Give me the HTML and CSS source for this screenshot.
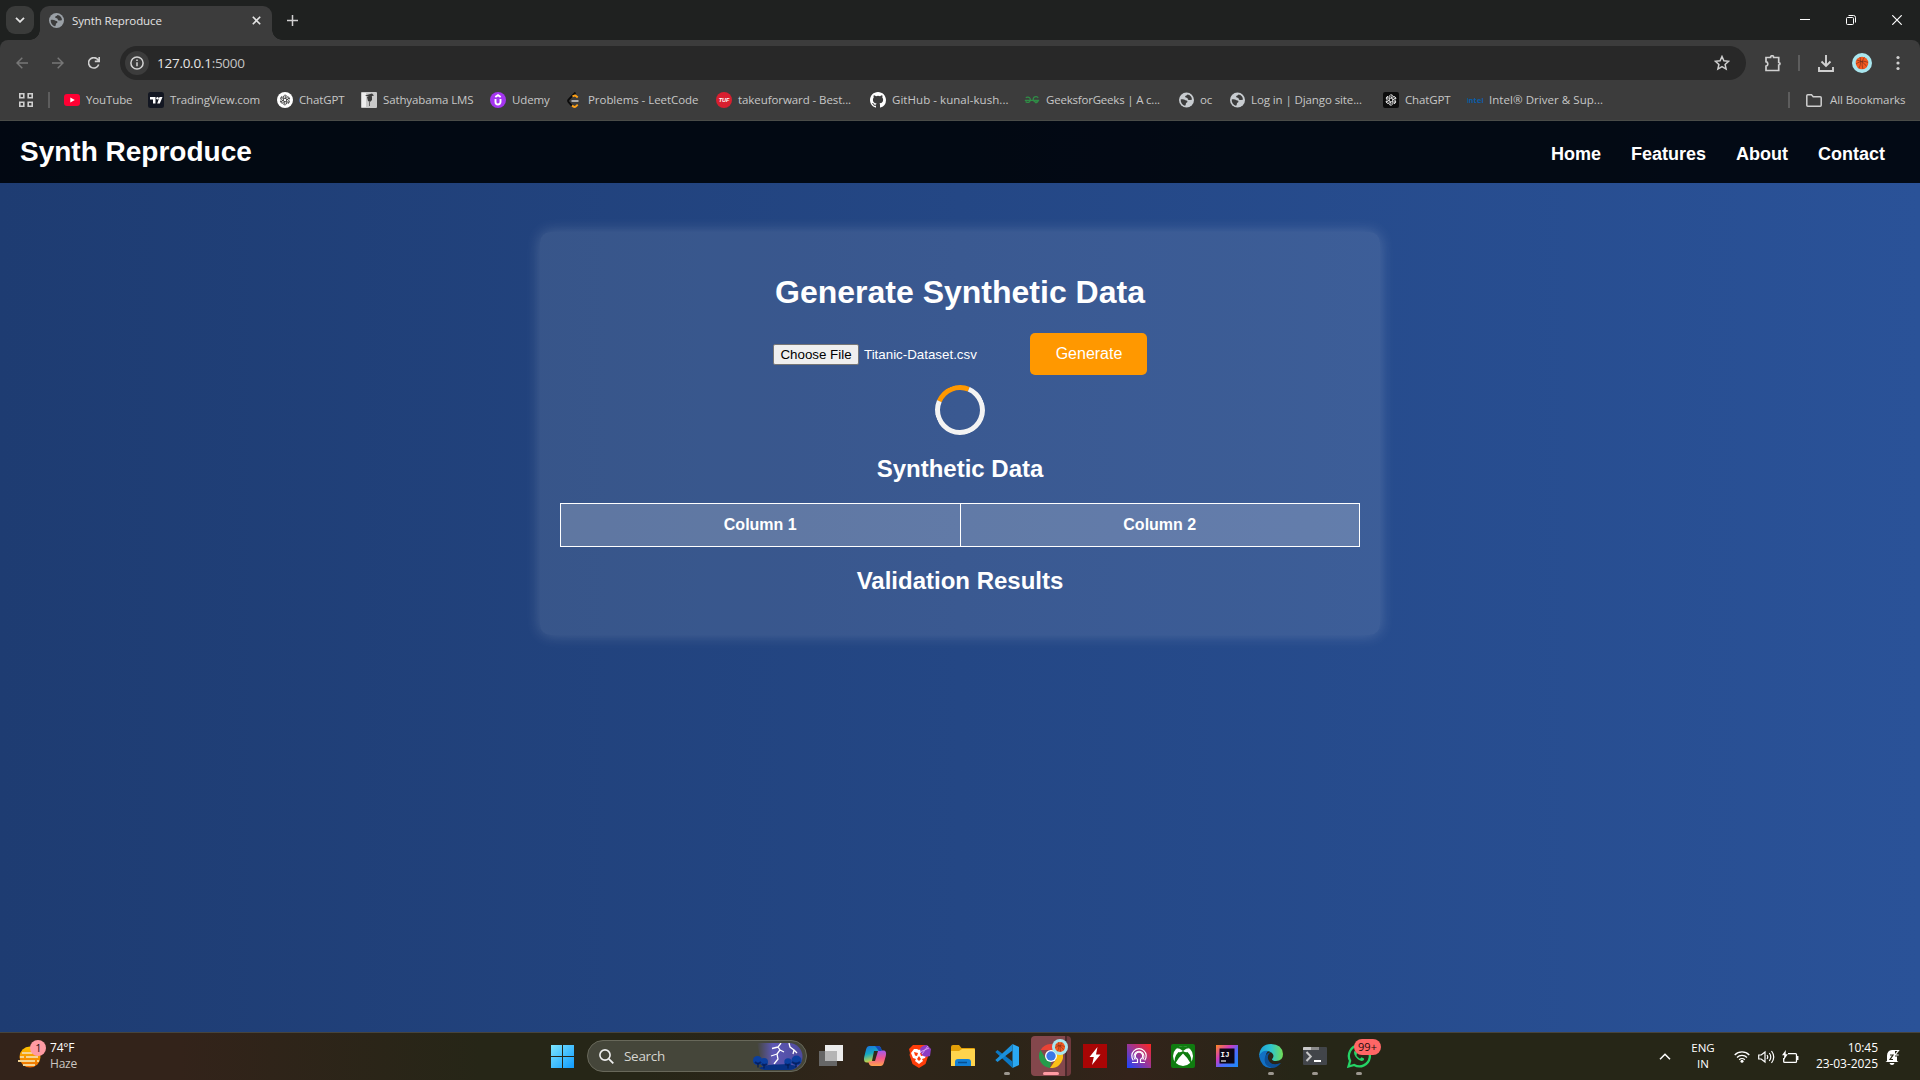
FILE: index.html
```html
<!DOCTYPE html>
<html lang="en">
<head>
<meta charset="utf-8">
<title>Synth Reproduce</title>
<link rel="stylesheet" href="styles.css">
</head>
<body>
<svg class="defs" width="0" height="0" aria-hidden="true">
  <symbol id="globe" viewBox="0 0 16 16"><circle cx="8" cy="8" r="8" fill="currentColor"/><path d="M1.800 7.500C3 6.800 5.500 7 6.600 8c1 .9 2.200.3 2.400 1.600.2 1.200-1.500 1-1.700 2.400-.1 1-.3 1.700-1 2.100C3.500 13.400 1.600 10.800 1.800 7.500zM9 2c-.3 1.300-2.600 1-2.500 2.500.1 1.200 1.600.8 2.300 1.400.8.7.4 1.900 1.700 2.100 1.200.2 2-.6 3.300-.2C13.900 4.500 12 2.500 9 2z" fill="#3c3c3c"/></symbol>
  <symbol id="knot" viewBox="0 0 24 24"><g fill="none" stroke="currentColor" stroke-width="1.500"><path id="petal" d="M12 8.200 8.700 10.100V5.900A3.600 3.600 0 0 1 14.900 3.500L11 5.700"/><use href="#petal" transform="rotate(60 12 12)"/><use href="#petal" transform="rotate(120 12 12)"/><use href="#petal" transform="rotate(180 12 12)"/><use href="#petal" transform="rotate(240 12 12)"/><use href="#petal" transform="rotate(300 12 12)"/></g></symbol>
  <symbol id="ball" viewBox="0 0 20 20"><circle cx="10" cy="10" r="10" fill="#a9e6ee"/><circle cx="10" cy="10" r="6.300" fill="#f4591f"/><path d="M4.600 7c4 .5 8 3 10 6.500M8 4c1 3 1 8-1.200 11.500M12.500 4.300C10 7 9.500 12 11 16M4 11c4-3 8-3.500 12-1.500" fill="none" stroke="#6a2b1b" stroke-width=".6"/></symbol>
</svg>

<div class="tabstrip">
  <div class="tab-search"><svg width="10" height="6" viewBox="0 0 10 6"><path d="m1 .8 4 4 4-4" fill="none" stroke="#e3e3e3" stroke-width="1.800"/></svg></div>
  <div class="tab">
    <svg class="tab-icon" width="15" height="15"><use href="#globe"/></svg>
    <span class="tab-title">Synth Reproduce</span>
    <svg width="9" height="9" viewBox="0 0 9 9"><path d="m.8.8 7.400 7.400m0-7.400L.8 8.200" stroke="#e3e3e3" stroke-width="1.600"/></svg>
  </div>
  <svg class="new-tab" width="11" height="11" viewBox="0 0 11 11"><path d="M5.500 0v11M0 5.500h11" stroke="#d0d0d0" stroke-width="1.500"/></svg>
  <div class="window-controls">
    <svg width="10" height="10" viewBox="0 0 10 10"><path d="M0 4.500h10" stroke="#fff"/></svg>
    <svg width="10" height="10" viewBox="0 0 10 10"><g fill="none" stroke="#fff"><rect x=".5" y="2.500" width="7" height="7" rx="1"/><path d="M2.500.5h5a2 2 0 0 1 2 2v5"/></g></svg>
    <svg width="10" height="10" viewBox="0 0 10 10"><path d="m.3.3 9.400 9.400m0-9.400L.3 9.700" stroke="#fff" stroke-width="1.200"/></svg>
  </div>
</div>

<div class="chrome-panel">
  <div class="toolbar">
    <div class="nav-buttons">
      <svg class="dim" width="12" height="12" viewBox="0 0 12 12"><path d="M12 6H1M6.300.7 1 6l5.300 5.300" fill="none" stroke="currentColor" stroke-width="1.500"/></svg>
      <svg class="dim" width="12" height="12" viewBox="0 0 12 12"><path d="M0 6h11M5.700.7 11 6l-5.300 5.300" fill="none" stroke="currentColor" stroke-width="1.500"/></svg>
      <svg width="12" height="12" viewBox="0 0 12 12"><path d="M10.700 7.500A5.200 5.200 0 1 1 9.800 2.500L11 4M11.200 0v4.400H6.800" fill="none" stroke="currentColor" stroke-width="1.600"/></svg>
    </div>
    <div class="omnibox">
      <span class="site-info"><svg width="14" height="14" viewBox="0 0 14 14"><circle cx="7" cy="7" r="6.100" fill="none" stroke="#d3d3d3" stroke-width="1.500"/><path d="M7 6.200v4M7 3.500v1.500" stroke="#d3d3d3" stroke-width="1.500"/></svg></span>
      <span class="url">127.0.0.1<span class="port">:5000</span></span>
      <svg class="star" width="16" height="16" viewBox="0 0 16 16"><path d="m8 1.500 1.900 4.300 4.700.5-3.500 3.200 1 4.600L8 11.700l-4.100 2.400 1-4.600L1.400 6.300l4.700-.5z" fill="none" stroke="#cfcfcf" stroke-width="1.500"/></svg>
    </div>
    <div class="toolbar-end">
      <svg class="puzzle" width="17" height="17" viewBox="0 0 17 17"><path d="M1 2.500h4.600v-.3a1.500 1.500 0 0 1 3 0v.3h5.100v5a1.300 1.300 0 0 1 0 2.600v5.400H1v-4.300a2.300 2.300 0 0 0 0-4.500z" fill="none" stroke="#d0d0d0" stroke-width="1.700"/></svg>
      <i class="divider"></i>
      <svg class="download" width="16" height="17" viewBox="0 0 16 17"><path d="M8 0v11M3.500 6.500 8 11l4.500-4.500M1 12v4h14v-4" fill="none" stroke="#d0d0d0" stroke-width="1.900"/></svg>
      <svg class="avatar" width="20" height="20"><use href="#ball"/></svg>
      <svg class="menu-dots" width="4" height="16" viewBox="0 0 4 16"><g fill="#d0d0d0"><circle cx="2" cy="2.500" r="1.600"/><circle cx="2" cy="8" r="1.600"/><circle cx="2" cy="13.500" r="1.600"/></g></svg>
    </div>
  </div>

  <div class="bookmarks">
    <svg class="apps" width="14" height="14" viewBox="0 0 14 14"><path d="M.8.8h4v4h-4zM9.200.8h4v4h-4zM.8 9.200h4v4h-4zM9.200 9.200h4v4h-4z" fill="none" stroke="#cfcfcf" stroke-width="1.600"/></svg>
    <i class="divider"></i>
    <div class="bookmark bm-youtube"><svg width="16" height="16" viewBox="0 0 16 16"><rect y="2" width="16" height="12" rx="3" fill="#ff0033"/><path d="m6.300 5.500 4.500 2.500-4.500 2.500z" fill="#fff"/></svg><span>YouTube</span></div>
    <div class="bookmark bm-tradingview"><svg width="16" height="16" viewBox="0 0 16 16"><rect width="16" height="16" rx="2.500" fill="#131722"/><path d="M2 5h5.500v6.500H5V7.500H2zM11.500 5H14.500l-2.700 6.500H9.200z" fill="#fff"/><circle cx="9.500" cy="6.200" r="1.200" fill="#fff"/></svg><span>TradingView.com</span></div>
    <div class="bookmark bm-chatgpt"><svg width="16" height="16" viewBox="0 0 16 16"><circle cx="8" cy="8" r="8" fill="#fff"/><use href="#knot" x="2" y="2" width="12" height="12" color="#222"/></svg><span>ChatGPT</span></div>
    <div class="bookmark bm-lms"><svg width="16" height="16" viewBox="0 0 16 16"><rect width="16" height="16" rx="1" fill="#c9c9c9"/><path d="M1 1h4v14H1z" fill="#eee"/><path d="M4 3.500 11 1.500l2 2-5 1.200zM6 5l5-1v4l-2 2-2-1z" fill="#3a3a3a"/><path d="M8.500 9v5" stroke="#666"/></svg><span>Sathyabama LMS</span></div>
    <div class="bookmark bm-udemy"><svg width="16" height="16" viewBox="0 0 16 16"><circle cx="8" cy="8" r="8" fill="#a435f0"/><path d="M5.500 7v3a2.500 2.500 0 0 0 5 0V7M5.300 5 8 3.200 10.700 5" fill="none" stroke="#fff" stroke-width="1.900"/></svg><span>Udemy</span></div>
    <div class="bookmark bm-leetcode"><svg width="16" height="16" viewBox="0 0 16 16"><g fill="none" stroke-width="1.900"><path d="M9.500.5 2.800 7.300c-1 1-.9 2 0 3l3.300 3.500" stroke="#0b0b0b"/><path d="m6.500 4.400 1.300-.6c.9-.4 1.800-.2 2.500.4l1.400 1.300M6 13.500q2.300 2.400 4 .8l1.700-1.700" stroke="#ffa116"/><path d="M5.500 9h7" stroke="#b3b3b3"/></g></svg><span>Problems - LeetCode</span></div>
    <div class="bookmark bm-tuf"><svg width="16" height="16" viewBox="0 0 16 16"><circle cx="8" cy="8" r="8" fill="#d81f2f"/><text x="8" y="10.200" text-anchor="middle" class="tuf-mark">TUF</text></svg><span>takeuforward - Best...</span></div>
    <div class="bookmark bm-github"><svg width="16" height="16" viewBox="0 0 16 16"><path fill="#fff" d="M8 0C3.580 0 0 3.580 0 8c0 3.540 2.290 6.530 5.470 7.590.4.070.55-.17.55-.38 0-.19-.010-.82-.010-1.490-2.010.37-2.530-.49-2.690-.94-.090-.23-.48-.94-.82-1.130-.28-.15-.68-.52-.010-.53.63-.010 1.080.58 1.230.82.72 1.210 1.870.87 2.330.66.070-.52.28-.87.510-1.070-1.780-.2-3.640-.89-3.640-3.950 0-.87.310-1.590.82-2.150-.080-.2-.36-1.020.080-2.120 0 0 .67-.21 2.200.82a7.640 7.640 0 0 1 4 0c1.530-1.040 2.200-.82 2.200-.82.44 1.100.16 1.920.080 2.120.51.56.82 1.270.82 2.150 0 3.070-1.870 3.750-3.650 3.950.29.25.54.73.54 1.480 0 1.070-.010 1.930-.010 2.200 0 .21.15.46.55.38A8.010 8.010 0 0 0 16 8c0-4.420-3.580-8-8-8z"/></svg><span>GitHub - kunal-kush...</span></div>
    <div class="bookmark bm-gfg"><svg width="16" height="16" viewBox="0 0 16 16"><path d="M.8 8.300h14.400M1.800 5.800A2.700 2.700 0 1 1 1.600 9.500M14.200 5.800A2.700 2.700 0 1 0 14.400 8.300 2.600 2.600 0 0 1 11 10.500" fill="none" stroke="#2f8d46" stroke-width="1.300"/></svg><span>GeeksforGeeks | A c...</span></div>
    <div class="bookmark bm-oc"><svg class="light-globe" width="15" height="16"><use href="#globe"/></svg><span>oc</span></div>
    <div class="bookmark bm-django"><svg class="light-globe" width="15" height="16"><use href="#globe"/></svg><span>Log in | Django site...</span></div>
    <div class="bookmark bm-chatgpt2"><svg width="16" height="16" viewBox="0 0 16 16"><rect width="16" height="16" rx="2" fill="#0c0c0c"/><use href="#knot" x="1.500" y="1.500" width="13" height="13" color="#fff"/></svg><span>ChatGPT</span></div>
    <div class="bookmark bm-intel"><svg width="16" height="16" viewBox="0 0 16 16"><text x="8" y="10.500" text-anchor="middle" class="intel-mark">intel</text></svg><span>Intel® Driver &amp; Sup...</span></div>
    <div class="all-bookmarks">
      <i class="divider"></i>
      <svg width="16" height="13" viewBox="0 0 16 13"><path d="M.8 11.200V1.800q0-1 1-1h3.700l1.700 2h7q1 0 1 1v7.400q0 1-1 1H1.800q-1 0-1-1z" fill="none" stroke="#cfcfcf" stroke-width="1.500"/></svg>
      <span>All Bookmarks</span>
    </div>
  </div>
</div>

<div class="page">
  <header class="site-header">
    <div class="brand">Synth Reproduce</div>
    <nav class="site-nav"><a>Home</a><a>Features</a><a>About</a><a>Contact</a></nav>
  </header>
  <main class="card">
    <h1>Generate Synthetic Data</h1>
    <div class="form-row">
      <div class="file-input"><span class="file-button">Choose File</span><span>Titanic-Dataset.csv</span></div>
      <button class="generate">Generate</button>
    </div>
    <div class="spinner"></div>
    <h2>Synthetic Data</h2>
    <table class="data-table"><tr><th>Column 1</th><th>Column 2</th></tr></table>
    <h2>Validation Results</h2>
  </main>
</div>

<div class="taskbar">
  <div class="weather">
    <svg width="28" height="28" viewBox="0 0 28 28"><defs><linearGradient id="sun" x2="0" y2="1"><stop stop-color="#ffc400"/><stop offset="1" stop-color="#f06a00"/></linearGradient></defs><circle cx="12" cy="17" r="10.500" fill="url(#sun)"/><path d="M4 13h10M2 17h4m2 0h12M0 21h17m2 0h2M5 25h12" stroke="#f5d491" stroke-width="1.800"/><circle cx="20" cy="8" r="8" fill="#ff9ba3"/><text x="20.500" y="12" text-anchor="middle" class="badge-text">1</text></svg>
    <div class="weather-text"><span class="temp">74°F</span><span class="sky">Haze</span></div>
  </div>

  <div class="apps-row">
    <div class="start"><svg width="23" height="23" viewBox="0 0 23 23"><defs><linearGradient id="win" x2="1" y2="1"><stop stop-color="#7ce6ff"/><stop offset="1" stop-color="#0f9bff"/></linearGradient></defs><path d="M0 0h11v11H0zM12 0h11v11H12zM0 12h11v11H0zM12 12h11v11H12z" fill="url(#win)"/></svg></div>
    <div class="search">
      <svg width="15" height="15" viewBox="0 0 15 15"><circle cx="6" cy="6" r="5.100" fill="none" stroke="#eee" stroke-width="1.600"/><path d="m9.800 9.800 4.500 4.500" stroke="#eee" stroke-width="1.800"/></svg>
      <span>Search</span>
      <svg class="storm" width="50" height="27" viewBox="0 0 50 27"><defs><linearGradient id="sky"><stop stop-color="#5d58b5" stop-opacity="0"/><stop offset=".35" stop-color="#5d58b5"/><stop offset="1" stop-color="#4e4a9d"/></linearGradient></defs><path d="M4 0h32a13.500 13.500 0 0 1 0 27H10z" fill="url(#sky)"/><path d="m28 0-3 4 2 3-3 4 1 5-4 5M25 4l-6 1.500M24 11l-6 2m9-6 4 2M36 0l1 4 4 3-1 4M41 7l3 3" fill="none" stroke="#fff" stroke-width="1.300"/><path d="M6 25q9-4 18-3.500 12-1 20 1.500-2 4-8 4H14q-6 0-8-2z" fill="#083184"/><g fill="#0b3f9f"><circle cx="4.500" cy="17.500" r="4.500"/><circle cx="11" cy="19" r="4"/><circle cx="35" cy="19" r="3.700"/><circle cx="43.500" cy="17.500" r="5"/></g><path d="M2 19q3 3 6 0m1 2q2 2 5 0m18 0q3 2 5 0m2-2q4 3 8 0" fill="none" stroke="#06236a" stroke-width="2"/><path d="M5 20v4.500m6-3v4m24-4v4m8-5v4" stroke="#041d52" stroke-width="1.200"/></svg>
    </div>
    <div class="app"><svg width="24" height="24" viewBox="0 0 24 24"><path d="M6 1h18v16H6z" fill="#ececec"/><path d="M0 7h18v15H0z" fill="#666"/><path d="M6 7h12v10H6z" fill="#b5b5b5"/></svg></div>
    <div class="app"><svg width="24" height="24" viewBox="0 0 24 24"><defs><linearGradient id="cp1" x2=".3" y2="1"><stop stop-color="#1b6fe0"/><stop offset=".5" stop-color="#14a9c4"/><stop offset="1" stop-color="#d8d83a"/></linearGradient><linearGradient id="cp2" x2="0" y2="1"><stop stop-color="#a25af0"/><stop offset=".5" stop-color="#f2568f"/><stop offset="1" stop-color="#ffa34c"/></linearGradient></defs><path d="M6.500 2H15q2.500 0 3.300 3l.4 2h-3q-2 0-2.600 2.300L11 16q-.7 2.500-3 2.500H4Q0 18.500 1.200 13l2-8Q4 2 6.500 2z" fill="url(#cp1)"/><path d="M17.500 22H9q-2.500 0-3.300-3l-.3-1.500H8q2.300 0 3-2.500l2-6.500Q13.700 6.500 16 6.500h4.500q3.500 0 2.300 5.500l-2 7q-.8 3-3.300 3z" fill="url(#cp2)"/><path d="M11 7h4l-3 10H9z" fill="#302a1a"/><path d="M12 2h3q2.500 0 3.300 3l.4 2h-3q-1.500-3-3.700-5z" fill="#1547b8"/></svg></div>
    <div class="app"><svg width="24" height="24" viewBox="0 0 24 24"><path d="M6 1h12l4 4-1 4 .5 2-3 9L12 24l-6.500-4-3-9L3 9 2 5z" fill="#ff3d0a"/><path d="M7 5h3l2 1 2-1h3l3 4-2 5-3 1 1 2-4 3-4-3 1-2-3-1-2-5z" fill="#fff"/><path d="m7 8 4 1-1 3-2-.5zM17 8l-4 1 1 3 2-.5zM12 12l2 3-2 2-2-2z" fill="#ff3d0a"/><path d="M13 5q2-4 7-4l4 4-1 7q-9 3-10-7z" fill="#8d3cc4"/><path d="m13 8 9-4m-7 6 6-8" stroke="#d79cf0"/></svg></div>
    <div class="app"><svg width="24" height="24" viewBox="0 0 24 24"><path d="M0 3q0-2 2-2h6l2.500 3H23q1 0 1 1v5H0z" fill="#e3a008"/><path d="M0 7h8l3-2h12q1 0 1 1v16H0z" fill="#ffd44d"/><path d="M4 22v-4q0-3 3-3h10q3 0 3 3v4z" fill="#1280d6"/><path d="M7 18.500h9" stroke="#064f91" stroke-width="1.500"/></svg></div>
    <div class="app running"><svg width="24" height="24" viewBox="0 0 24 24"><path d="M17.500 0 24 3v18l-6.500 3z" fill="#2aa8f2"/><path d="m17.500 24-15-14L.3 8 2.500 6l15 11.500z" fill="#0b78c4"/><path d="m17.500 0-15 14L.3 16l2.200 2 15-11.500z" fill="#1b91dc"/></svg></div>
    <div class="app active running"><svg class="chrome-icon" width="24" height="24" viewBox="0 0 24 24"><path d="M1.600 6A12 12 0 0 1 22.400 6H12z" fill="#ea4335"/><path d="M1.600 6 6.800 15 12 18l-1 6A12 12 0 0 1 1.600 6z" fill="#269c4b"/><path d="M22.400 6A12 12 0 0 1 11 24l6.200-9L12 6z" fill="#fbc116"/><circle cx="12" cy="12" r="6" fill="#fff"/><circle cx="12" cy="12" r="4.700" fill="#3b78e7"/></svg><svg class="chrome-badge" width="16" height="16"><use href="#ball"/></svg></div>
    <div class="app"><svg width="24" height="24" viewBox="0 0 24 24"><path d="M0 0h24v24H0z" fill="#a90505"/><path d="M14.500 3 6.500 13h4.300L9 21l8.500-10.500h-4.500z" fill="#fff"/></svg></div>
    <div class="app"><svg width="24" height="24" viewBox="0 0 24 24"><defs><linearGradient id="pr" y1="1" x2="1" y2="0"><stop stop-color="#1745ff"/><stop offset=".5" stop-color="#9a3699"/><stop offset="1" stop-color="#ff261c"/></linearGradient></defs><path d="M0 0h24v24H0z" fill="url(#pr)"/><g fill="none" stroke="#fff"><path d="M5 18.500h5.500v-3.200a3.700 3.700 0 1 1 3 0v3.200H18" stroke-width="1.200"/><path d="M6.300 16.300a7.200 7.200 0 1 1 11.400 0M8.300 15.500a4.900 4.900 0 1 1 7.400 0" stroke-width="1.200"/></g></svg></div>
    <div class="app"><svg width="24" height="24" viewBox="0 0 24 24"><rect width="24" height="24" rx="2" fill="#107c10"/><circle cx="12" cy="12" r="10" fill="#fff"/><path d="M5 4q4 0 7 3 3-3 7-3-3-2-7-2T5 4zM12 7q-3 2-4.500 1-5 5-3.500 12 3-6 8-10.500Q17 14 20 20q1.500-7-3.500-12Q15 9 12 7z" fill="#107c10"/></svg></div>
    <div class="app"><svg width="24" height="24" viewBox="0 0 24 24"><defs><linearGradient id="ij" x2="1" y2="1"><stop stop-color="#ff8a1f"/><stop offset=".35" stop-color="#d13bbd"/><stop offset=".6" stop-color="#4b6bff"/><stop offset="1" stop-color="#1b8cf5"/></linearGradient></defs><path d="M1 1h22v22H1z" fill="url(#ij)"/><path d="M4.500 4.500h15v15h-15z" fill="#0c0615"/><text x="5.500" y="12.500" class="ij-mark">IJ</text><path d="M6 17h5" stroke="#ccc" stroke-width="1.400"/></svg></div>
    <div class="app running"><svg width="24" height="24" viewBox="0 0 24 24"><defs><linearGradient id="ed" x2="1"><stop stop-color="#1c9ddb"/><stop offset=".5" stop-color="#2ec5cf"/><stop offset="1" stop-color="#72dd55"/></linearGradient></defs><path d="M0 12Q1 0 12 0q11 0 12 10 0 7-7 7-4 0-4-2 3-3 0-6Q7 4 0 12z" fill="url(#ed)"/><path d="M0 12q3-6 9-5-3 3-2 8t7 8.500Q3 26 0 12z" fill="#1270c4"/><path d="M12 8q-5 4-2 9t12 2q-4 5-9 5Q4 22 6 13q1-4 6-5z" fill="#0c4f97"/><path d="M11 9q4 2 2 6-1 4 9 3-9 5-12-2-1-4 1-7z" fill="#2c2518"/></svg></div>
    <div class="app running"><svg width="24" height="24" viewBox="0 0 24 24"><rect y="3" width="24" height="18" rx="1" fill="#42454a"/><path d="M0 4q0-1 1-1h7v3H0z" fill="#c9c9c9"/><path d="M8 3h8v3H8z" fill="#8b8b8b"/><path d="m3.500 8 4.300 4.500-4.300 4.500" fill="none" stroke="#c7c7c7" stroke-width="2"/><path d="M11 17h7" stroke="#fff" stroke-width="2"/></svg></div>
    <div class="app running"><svg width="24" height="24" viewBox="0 0 24 24"><path d="m1.500 22.500 1.600-5.700A10.500 10.500 0 1 1 7.200 21z" fill="none" stroke="#25d366" stroke-width="2.300"/><path d="M8 6.500c-3 2 1.500 9.500 6.500 10.500 2 0 3-1.500 2.500-2.500l-2.500-1.200-1.500 1.400q-2.500-1-3.700-3.700l1-1.300z" fill="#25d366"/></svg><span class="count">99+</span></div>
  </div>

  <div class="tray">
    <svg class="chevron" width="12" height="7" viewBox="0 0 12 7"><path d="m1 6.200 5-5 5 5" fill="none" stroke="#fff" stroke-width="1.500"/></svg>
    <div class="lang"><span>ENG</span><span>IN</span></div>
    <svg class="wifi" width="16" height="13" viewBox="0 0 16 13"><g fill="none" stroke="#fff" stroke-width="1.300"><path d="M.7 5a10.300 10.300 0 0 1 14.600 0M3 7.500a7 7 0 0 1 10 0M5.200 9.700a4 4 0 0 1 5.600 0"/></g><circle cx="8" cy="11.300" r="1.500" fill="#fff"/></svg>
    <svg class="speaker" width="17" height="14" viewBox="0 0 17 14"><g fill="none" stroke="#fff" stroke-width="1.200"><path d="M.7 5v4h2.500L7 12V2L3.200 5zM9 5q1.500 2 0 4M11.300 3q3 4 0 8M13.500 1q4.500 6 0 12"/></g></svg>
    <svg class="battery" width="17" height="14" viewBox="0 0 17 14"><path d="M6 3.600h7.500q1 0 1 1v6.800q0 1-1 1H2.700q-1 0-1-1V8M15.800 6v4" fill="none" stroke="#fff" stroke-width="1.300"/><path d="M3.800 0 0 5.300h2.300L1.800 10l4-5.700H3.600z" fill="#fff"/></svg>
    <div class="clock"><span>10:45</span><span>23-03-2025</span></div>
    <svg class="bell" width="15" height="16" viewBox="0 0 15 16"><path d="M2 12V7q0-5.500 5-6h3v6.500h2V12l1.500 1H.5zM4.500 14h5q-.5 2-2.500 2t-2.500-2z" fill="#fff"/><path d="M5 6h3l-3 4.500h3" fill="none" stroke="#262617" stroke-width="1.200"/><path d="M10 1.500h3.500L10 6h3.700" fill="none" stroke="#fff" stroke-width="1.200"/></svg>
  </div>
</div>
</body>
</html>
```
FILE: styles.css
```css
* { box-sizing: border-box; }
body {
  margin: 0;
  width: 1920px;
  height: 1080px;
  overflow: hidden;
  display: flex;
  flex-direction: column;
  background: #1f2120;
  font-family: "Open Sans", "Noto Sans", sans-serif;
  font-size: 12px;
  color: #e3e3e3;
}
svg { display: block; flex: none; }
.defs { position: absolute; }
span { white-space: nowrap; }

/* Tab strip */
.tabstrip { height: 40px; flex: none; display: flex; padding-left: 6px; background: #1f2120; }
.tab-search {
  width: 28px; height: 28px; margin-top: 6px; border-radius: 9px;
  background: #3a3b3a; display: flex; align-items: center; justify-content: center;
}
.tab {
  position: relative;
  width: 232px; height: 34px; margin: 6px 0 0 6px; padding: 0 11px 6px 9px;
  display: flex; align-items: center;
  background: #3c3c3c; border-radius: 9px 9px 0 0;
}
.tab::before, .tab::after {
  content: ""; position: absolute; bottom: 0; width: 10px; height: 10px;
}
.tab::before { left: -10px; background: radial-gradient(circle at 0 0, transparent 9.500px, #3c3c3c 10px); }
.tab::after { right: -10px; background: radial-gradient(circle at 100% 0, transparent 9.500px, #3c3c3c 10px); }
.tab-icon { color: #9aa0a6; }
.tab-title { margin-left: 8px; flex: 1; font-size: 11.500px; letter-spacing: -.12px; }
.new-tab { margin: 15px 0 0 15px; }
.window-controls { margin: 15px 18px 0 auto; display: flex; gap: 36px; }

/* Toolbar */
.chrome-panel {
  height: 81px; flex: none; background: #3c3c3c; border-bottom: 1px solid #4a4c48;
  border-radius: 8px 8px 0 0;
}
.toolbar { height: 46px; padding-top: 6px; display: flex; }
.nav-buttons { width: 120px; height: 34px; padding-left: 16px; display: flex; align-items: center; gap: 24px; color: #d0d0d0; }
.dim { color: #777; }
.omnibox {
  width: 1626px; height: 34px; border-radius: 17px; background: #282828;
  display: flex; align-items: center; padding: 0 16px 0 5px;
}
.site-info { width: 24px; height: 24px; border-radius: 12px; background: #3c3c3c; display: flex; align-items: center; justify-content: center; }
.url { margin-left: 8px; font-size: 13.500px; letter-spacing: -.26px; color: #e6e6e6; }
.port { color: #c4c4c4; }
.star { margin-left: auto; }
.toolbar-end { height: 34px; display: flex; align-items: center; }
.puzzle { margin-left: 19px; }
.divider { width: 2px; height: 16px; background: #5d5d5d; flex: none; }
.toolbar-end .divider { margin: 0 18px 0 16px; }
.avatar { margin-left: 18px; }
.menu-dots { margin-left: 24px; }

/* Bookmarks */
.bookmarks { height: 28px; display: flex; align-items: center; padding-left: 19px; color: #c7c7c7; }
.bookmarks > .divider { margin: 0 14px 0 15px; }
.bookmark { display: flex; align-items: center; gap: 6px; flex: none; font-size: 11.500px; letter-spacing: -.12px; }
.bookmark span, .all-bookmarks span { margin-top: -2px; }
.bm-youtube { width: 84px; }
.bm-tradingview { width: 129px; }
.bm-chatgpt { width: 84px; }
.bm-lms { width: 129px; }
.bm-udemy { width: 76px; }
.bm-leetcode { width: 150px; letter-spacing: -.05px; }
.bm-tuf { width: 154px; letter-spacing: -.08px; }
.bm-github { width: 154px; letter-spacing: .05px; }
.bm-gfg { width: 155px; letter-spacing: -.2px; }
.bm-oc { width: 51px; }
.bm-django { width: 153px; letter-spacing: -.1px; }
.bm-chatgpt2 { width: 84px; }
.bm-intel { width: 139px; letter-spacing: .05px; }
.light-globe { color: #c8ccd0; }
.tuf-mark { font: italic bold 5.500px "Liberation Sans", sans-serif; fill: #fff; }
.intel-mark { font: bold 7.500px "Open Sans", sans-serif; fill: #0a5ea8; }
.all-bookmarks { margin-left: auto; margin-right: 15px; display: flex; align-items: center; font-size: 11.500px; letter-spacing: -.1px; }
.all-bookmarks .divider { margin-right: 16px; }
.all-bookmarks span { margin-left: 8px; width: 75px; }

/* Web page */
.page {
  flex: 1; min-height: 0; font-family: "Liberation Sans", Arial, sans-serif; font-size: 16px; color: #fff;
  background: linear-gradient(to right, #1e3c72, #2a5298);
}
.site-header {
  height: 62px; padding: 0 35px 0 20px; display: flex; justify-content: space-between; align-items: center;
  background: rgba(0, 4, 10, .92);
}
.brand { font-size: 28px; font-weight: bold; }
.site-nav { display: flex; gap: 30px; padding-top: 5px; font-size: 18px; font-weight: bold; }
.card {
  width: 840px; height: 403px; margin: 49px auto 0; padding: 42px 20px 0;
  display: flex; flex-direction: column; align-items: center;
  border-radius: 10px; background: rgba(255, 255, 255, .1);
  box-shadow: 0 0 15px rgba(255, 255, 255, .2);
}
h1 { margin: 0; font-size: 32px; line-height: 37px; }
.form-row { margin-top: 22px; height: 42px; width: 374px; display: flex; justify-content: space-between; align-items: center; }
.file-input { display: flex; align-items: center; gap: 5px; margin-top: 1px; font-size: 13.333px; }
.file-button {
  width: 86px; height: 21px; border: 1px solid #767676; border-radius: 2px;
  background: #efefef; color: #000; text-align: center; line-height: 19px;
}
.generate {
  width: 117px; height: 42px; padding: 0 0 0 1px; border: 0; border-radius: 5px; background: #ff9800; color: #fff;
  font: 16px "Liberation Sans", Arial, sans-serif;
}
.spinner {
  width: 50px; height: 50px; margin-top: 10px; flex: none; border-radius: 50%;
  border: 5px solid #f3f3f3; border-top-color: #ff9800; transform: rotate(-22deg);
}
h2 { margin: 20px 0; font-size: 24px; line-height: 28px; }
.data-table { width: 800px; height: 44px; border-collapse: collapse; table-layout: fixed; }
.data-table th { border: 1px solid #fff; background: rgba(255, 255, 255, .2); padding: 0; }

/* Taskbar */
.taskbar {
  position: relative; height: 48px; flex: none; display: flex; align-items: center; color: #fff;
  border-top: 1px solid #47443c;
  background: linear-gradient(to right, #33231a 0, #33231a 180px, #262617 480px, #262617 640px, #30251a 850px, #2c2518 1000px, #33231a 1130px, #262617 1300px, #262617 1920px);
}
.weather { width: 550px; padding-left: 18px; display: flex; gap: 4px; align-items: center; }
.weather > svg { margin-top: -5px; }
.badge-text { font: 11px "Open Sans", sans-serif; fill: #201010; }
.weather-text { display: flex; flex-direction: column; margin-top: -2px; font-size: 12px; line-height: 16px; letter-spacing: -.2px; }
.temp { font-weight: 500; }
.sky { color: #cbc7c2; }
.apps-row { display: flex; align-items: center; height: 47px; }
.start { width: 37px; }
.start svg { margin-left: 1px; margin-top: -1px; }
.search {
  width: 220px; height: 32px; margin: -1px 2px 0 0; border-radius: 16px; border: 1px solid #68685a; background: #45463a;
  display: flex; align-items: center; padding: 0 3px 0 11px; font-size: 13.500px; color: #d5d5d0;
}
.search span { margin-left: 10px; letter-spacing: -.3px; }
.storm { margin-left: auto; }
.app { position: relative; width: 44px; height: 47px; display: flex; align-items: center; justify-content: center; }
.app > svg { margin-top: -1px; }
.running::after {
  content: ""; position: absolute; left: 19px; bottom: 5px; width: 6px; height: 3px; border-radius: 2px; background: #9c978f;
}
.active::before {
  content: ""; position: absolute; left: 2px; top: 3px; width: 40px; height: 40px; border-radius: 4px;
  background: linear-gradient(to right, #84474c 34px, #49292b 34px, #49292b 36px, #70393d 36px);
}
.active.running::after { left: 14px; width: 16px; background: #ff9ba3; }
.app .chrome-icon { position: relative; }
.app .chrome-badge { position: absolute; left: 23px; top: 6px; margin: 0; }
.ij-mark { font: bold 7.500px "Liberation Mono", monospace; fill: #fff; }
.count {
  position: absolute; left: 17px; top: 6px; width: 27px; height: 16px; border-radius: 8px; background: #ff6666;
  color: #1d0c0c; font-size: 11px; line-height: 16px; text-align: center;
}
.tray { margin-left: auto; display: flex; align-items: center; padding-right: 20px; font-size: 12px; line-height: 16px; letter-spacing: -.05px; }
.lang { width: 32px; margin: -2px 0 0 16px; display: flex; flex-direction: column; align-items: center; font-size: 11.500px; }
.wifi { margin-left: 15px; }
.speaker { margin-left: 8px; }
.battery { margin-left: 7px; }
.clock { width: 79px; margin-top: -2px; display: flex; flex-direction: column; align-items: flex-end; }
.bell { margin-left: 7px; }
```
